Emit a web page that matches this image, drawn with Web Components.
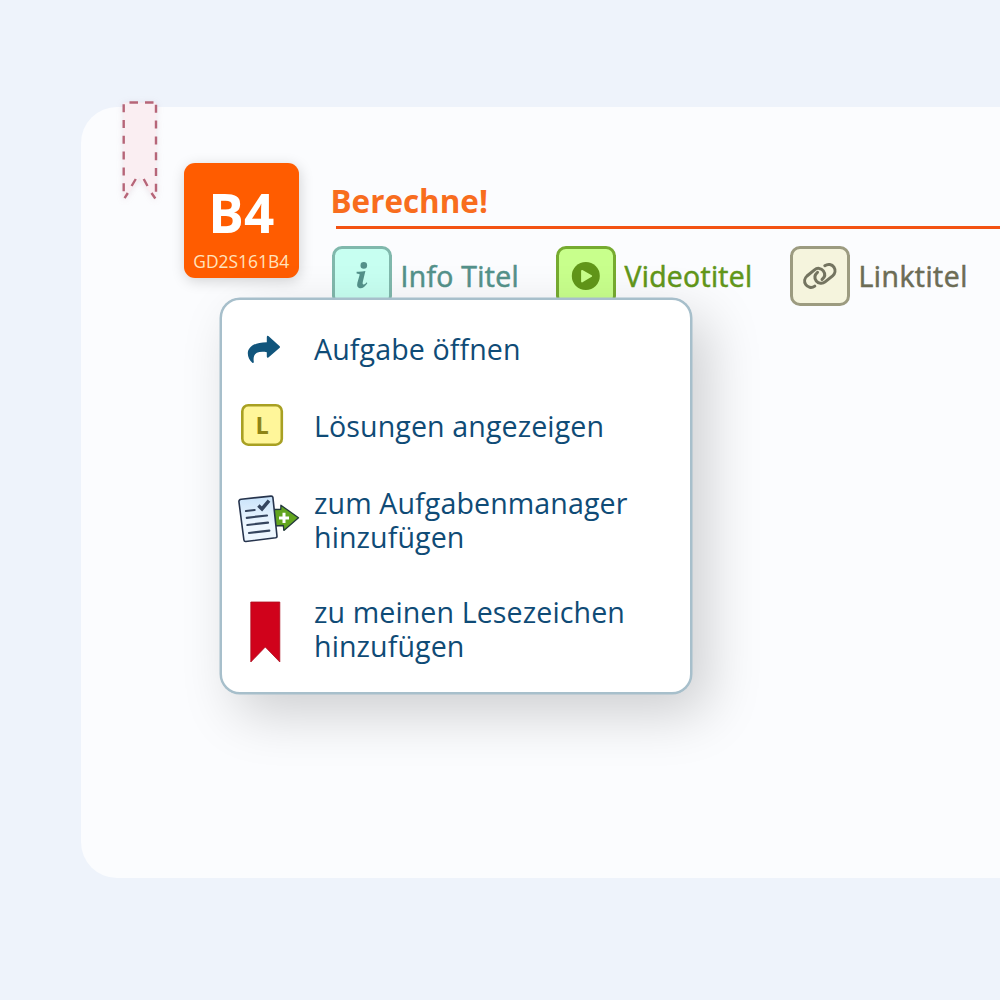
<!DOCTYPE html>
<html lang="de">
<head>
<meta charset="UTF-8">
<title>Berechne!</title>
<style>
  body {
    margin: 0;
    height: 1000px;
    box-sizing: border-box;
    padding: 107px 0 0 81px;
    overflow: hidden;
    background: #eef3fb;
    font-family: "Open Sans", "Noto Sans", sans-serif;
  }
</style>
</head>
<body>

<task-card>
  <task-badge slot="badge" code="GD2S161B4">B4</task-badge>
  <span slot="title">Berechne!</span>
  <media-chip kind="info">Info Titel</media-chip>
  <media-chip kind="video">Videotitel</media-chip>
  <media-chip kind="link">Linktitel</media-chip>
  <context-menu slot="menu">
    <menu-entry icon="open">Aufgabe öffnen</menu-entry>
    <menu-entry icon="solution">Lösungen angezeigen</menu-entry>
    <menu-entry icon="manager">zum Aufgabenmanager<br>hinzufügen</menu-entry>
    <menu-entry icon="bookmark">zu meinen Lesezeichen<br>hinzufügen</menu-entry>
  </context-menu>
</task-card>

<script>
// Icons inside the chips, 60x60 including the frame
const chipIcons = {
  info: `<svg width="60" height="60" viewBox="0 0 60 60" fill="#54918a">
    <circle cx="31.8" cy="19.4" r="3.3"/>
    <path d="M24.6 25.7 Q29 26 33.4 25 L30.7 36.2 Q30.2 39 32 38.5 Q33.3 38 34.8 36.2 L35.3 37.3 Q31.9 42.7 27.7 42.2 Q24.3 41.5 25.4 36.8 L27.6 29 Q28 27.5 24.6 27.5 Z"/>
  </svg>`,
  video: `<svg width="60" height="60" viewBox="0 0 60 60">
    <circle cx="29.8" cy="30" r="14" fill="#619619"/>
    <path d="M26 24.8 L35.2 30 L26 35.6 Z" fill="#c8ff8c" stroke="#c8ff8c" stroke-width="1.8" stroke-linejoin="round"/>
  </svg>`,
  link: `<svg width="60" height="60" viewBox="0 0 60 60" fill="none" stroke="#747460" stroke-width="3" stroke-linecap="round">
    <path d="M24.8 40.1 C21.5 42.5 17.5 41.3 15.7 38.5 C13.8 35.7 14.5 32.3 17 30 L24.5 23.8 C27.2 21.5 31.2 22 33.3 24.8 C35.4 27.7 35 31 32 33.5"/>
    <path d="M34.8 19.7 C38 17.4 42 18.3 43.9 21.1 C45.8 24 45.2 27.5 42.6 29.8 L35.1 35.9 C32.4 38.2 28.4 37.7 26.3 35 C24.2 32.1 24.7 28.7 27.5 26.3"/>
  </svg>`
};

// Icons of the menu rows
const menuIcons = {
  open: `<svg width="60" height="60" viewBox="0 0 60 60">
    <path d="M29.8 17.2 Q29.8 15.4 31.4 16 L42.7 26.2 Q43.3 27 42.7 27.7 L31.4 37.6 Q29.8 38.2 29.8 36.5 V32.2 C20 30.8 15.5 33.8 16.8 41.8 Q16.7 43.7 15.3 42.8 C7.5 35.5 8.4 22.3 29.8 22.2 Z" fill="#11557c"/>
  </svg>`,
  solution: `<svg width="60" height="60" viewBox="0 0 60 60">
    <rect x="4.3" y="9.2" width="39.5" height="39.5" rx="6" fill="#fff69a" stroke="#a8a023" stroke-width="2.6"/>
    <text x="24.1" y="37.7" text-anchor="middle" font-size="23.5" font-weight="700" fill="#8d8416">L</text>
  </svg>`,
  manager: `<svg width="64" height="60" viewBox="0 0 64 60">
    <defs><linearGradient id="sheet" x1="0" y1="0" x2="0" y2="1">
      <stop offset="0" stop-color="#c9e3fa"/><stop offset=".65" stop-color="#eef7ff"/>
    </linearGradient></defs>
    <path d="M36 22.5 L43.8 22.3 L43.9 18.2 L61.5 30.8 L46.9 43.4 L46.3 38.5 L37 39 Z" fill="#62a51f" stroke="#22383c" stroke-width="1.3" stroke-linejoin="round"/>
    <path d="M47 25.8 V35.9 M42 30.9 H52" stroke="#fff" stroke-width="3"/>
    <path d="M4.2 12.2 L34 9.1 Q35.7 9 35.9 10.4 L40 49.2 Q40.1 50.5 38.6 50.8 L8.8 54.5 Q7.1 54.6 6.9 53 L1.9 14.5 Q1.9 12.5 4.2 12.2 Z" fill="url(#sheet)" stroke="#26344d" stroke-width="1.6"/>
    <g fill="none" stroke="#35455e" stroke-width="2.2" stroke-linecap="round">
      <path d="M9 24 L17.6 23 M9.8 30.8 L30 28.5 M10.4 38 L31 35.6 M12 46 L32.3 43.7"/>
      <path d="M21.4 18.6 L25 22 L32 13.7" stroke-width="3.5" stroke-linecap="butt"/>
    </g>
  </svg>`,
  bookmark: `<svg width="60" height="62" viewBox="0 0 60 62">
    <path d="M13.8 1 H42.8 V61 L28.3 46 L13.8 61 Z" fill="#d0021b" stroke="#ad0f20" stroke-width=".8"/>
  </svg>`
};

class TaskCard extends HTMLElement {
  constructor() {
    super();
    this.attachShadow({ mode: 'open' }).innerHTML = `
      <style>
        :host {
          display: block;
          position: relative;
          box-sizing: border-box;
          height: 771px;
          padding: 55.5px 0 0 102.5px;
          border-radius: 36px 0 0 36px;
          background: #fbfcfe;
        }
        .ribbon {
          position: absolute;
          left: 34px;
          top: -13px;
          filter: drop-shadow(0 1px 3px rgba(150, 100, 120, .15));
        }
        .head { display: flex; align-items: flex-start; gap: 32px; }
        .main { flex: 1; min-width: 0; }
        h1 {
          box-sizing: border-box;
          height: 66.5px;
          margin: 0 0 0 5px;
          padding: 17px 0 0;
          border-bottom: 3.5px solid #f35212;
          font-size: 31.4px;
          line-height: 42px;
          font-weight: 700;
          color: #f86d1e;
        }
        h1 ::slotted(span) { margin-left: -5.5px; }
        .chips { display: flex; padding: 17px 0 0 .5px; }
      </style>
      <svg class="ribbon" width="50" height="116" viewBox="0 0 50 116">
        <path d="M8.5 8.5 H41 V106 L24.5 84 L8.5 106 Z" fill="#faeef2"/>
        <g fill="none" stroke="#b66578" stroke-width="2.4">
          <path d="M14.5 8.5 H23 M30 8.5 H38.5"/>
          <path d="M8.7 10.2 V104" stroke-dasharray="8 7.8"/>
          <path d="M41 10.8 V105" stroke-dasharray="8 7.8"/>
          <path d="M20.8 85 L16.6 92 M12.8 99 L9.6 104.2 M28.7 85 L32.5 92 M36.5 99 L40.3 104.5"/>
        </g>
      </svg>
      <div class="head">
        <slot name="badge"></slot>
        <div class="main">
          <h1><slot name="title"></slot></h1>
          <div class="chips"><slot></slot></div>
        </div>
      </div>
      <slot name="menu"></slot>
    `;
  }
}

class TaskBadge extends HTMLElement {
  connectedCallback() {
    this.attachShadow({ mode: 'open' }).innerHTML = `
      <style>
        :host {
          display: flex;
          flex-direction: column;
          align-items: center;
          flex: none;
          box-sizing: border-box;
          width: 115.5px;
          height: 115px;
          padding-top: 15px;
          border-radius: 11px;
          background: #ff5c00;
          box-shadow: 1px 3px 14px rgba(0, 0, 0, .17);
          color: #fff;
        }
        .name { font-size: 53px; line-height: 70px; font-weight: 700; }
        .code { font-size: 17.4px; line-height: 26px; color: #ffe3bd; white-space: nowrap; }
      </style>
      <div class="name"><slot></slot></div>
      <div class="code">${this.getAttribute('code')}</div>
    `;
  }
}

class MediaChip extends HTMLElement {
  connectedCallback() {
    this.attachShadow({ mode: 'open' }).innerHTML = `
      <style>
        :host {
          display: flex;
          flex: none;
          align-items: center;
          gap: 9px;
          width: 224px;
          font-size: 28.4px;
          line-height: 60px;
          letter-spacing: .3px;
          /* medium weight, between regular and semibold */
          -webkit-text-stroke: .55px currentColor;
          white-space: nowrap;
          color: #54918a;
        }
        :host([kind="video"]) { width: 234px; color: #619619; }
        :host([kind="link"]) { width: auto; letter-spacing: .5px; color: #6c6c55; }
        .icon {
          box-sizing: border-box;
          width: 60px;
          height: 60px;
          border: 3px solid #80b8ac;
          border-radius: 10px;
          background: #c7fff1;
        }
        .icon svg { display: block; margin: -3px; }
        :host([kind="video"]) .icon { border-color: #76ab30; background: #c8ff8c; }
        :host([kind="link"]) .icon { border-color: #9c9b80; background: #f5f4dd; }
      </style>
      <div class="icon">${chipIcons[this.getAttribute('kind')]}</div>
      <span><slot></slot></span>
    `;
  }
}

class ContextMenu extends HTMLElement {
  constructor() {
    super();
    this.attachShadow({ mode: 'open' }).innerHTML = `
      <style>
        /* floats above the card content */
        :host {
          position: absolute;
          left: 139px;
          top: 190.5px;
          display: flex;
          flex-direction: column;
          gap: 43px;
          box-sizing: border-box;
          width: 471.5px;
          height: 396px;
          padding: 32px 0 0 13.5px;
          border: 2px solid #a7bfcb;
          border-radius: 20px;
          background: #fff;
          box-shadow: 0 0 0 .5px #a7bfcb, 16px 20px 54px rgba(0, 0, 0, .18);
        }
        ::slotted(:last-child) { margin-top: -1.5px; }
      </style>
      <slot></slot>
    `;
  }
}

class MenuEntry extends HTMLElement {
  connectedCallback() {
    this.attachShadow({ mode: 'open' }).innerHTML = `
      <style>
        :host {
          display: flex;
          align-items: center;
          font-size: 28.6px;
          line-height: 34px;
          letter-spacing: .1px;
          color: #0f4b76;
          white-space: nowrap;
        }
        .icon { width: 78.5px; flex: none; }
        .icon svg { display: block; margin: -12px 0 -14px 1.7px; }
        :host([icon="solution"]) .icon svg { margin: -13px 0 -13px 2px; }
        :host([icon="manager"]) .icon svg { margin: -15.5px 0 -10.5px 1.2px; }
        :host([icon="bookmark"]) .icon svg { margin: -10px 0 -16px 1.2px; }
      </style>
      <div class="icon">${menuIcons[this.getAttribute('icon')]}</div>
      <div><slot></slot></div>
    `;
  }
}

customElements.define('task-card', TaskCard);
customElements.define('task-badge', TaskBadge);
customElements.define('media-chip', MediaChip);
customElements.define('context-menu', ContextMenu);
customElements.define('menu-entry', MenuEntry);
</script>
</body>
</html>
